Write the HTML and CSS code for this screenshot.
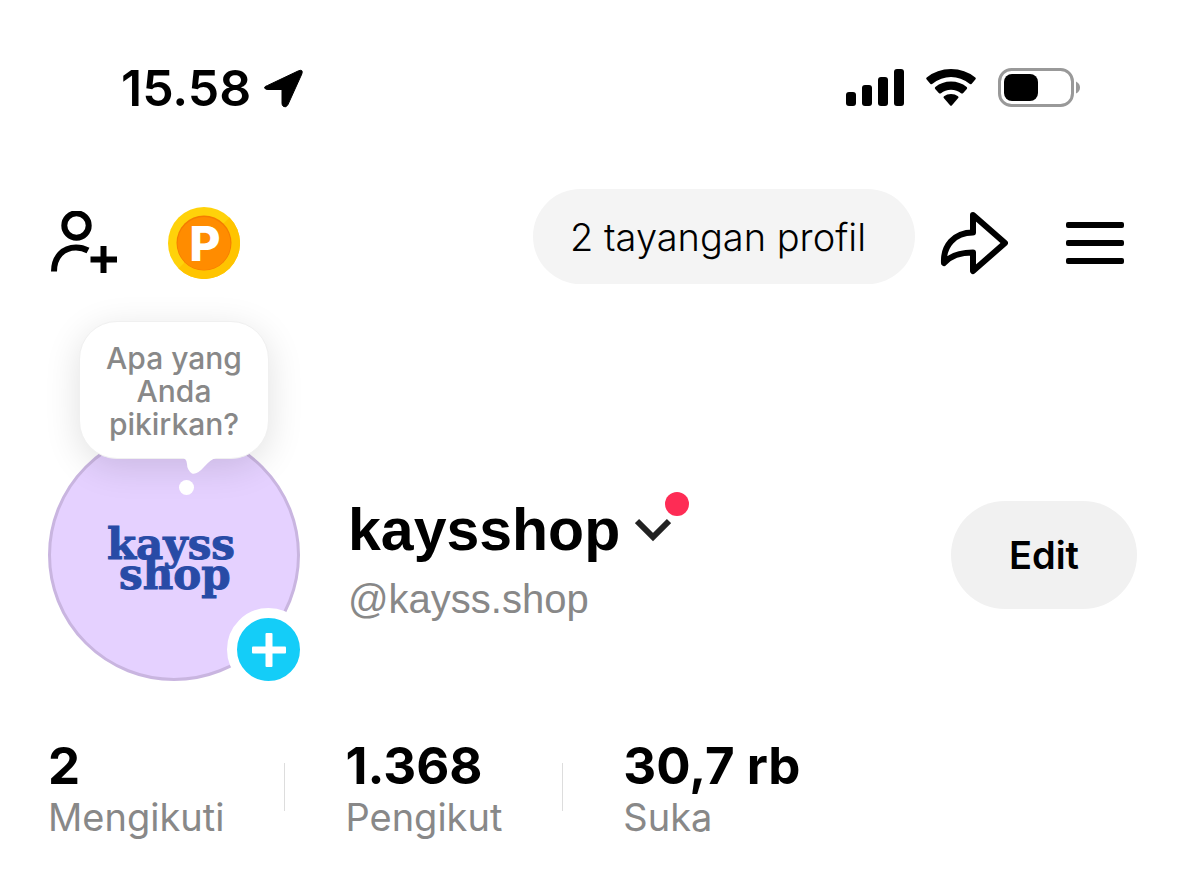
FILE: index.html
```
<!DOCTYPE html>
<html lang="id">
<head>
    <meta charset="UTF-8">
    <meta name="viewport" content="width=device-width, initial-scale=1.0">
    <title>kaysshop</title>
    <link rel="stylesheet" href="styles.css">
</head>
<body>
    <div class="status-bar">
        <div class="status-left">
            <span class="time">15.58</span>
            <svg width="40" height="40" viewBox="0 0 40 40" stroke="#000" stroke-linejoin="round"><path d="M3.500 17.500 34.500 2.800Q39.500 1 37.800 6L24 36.500Q22.300 40 19.500 38.500 18 37.500 18 35.500V21.500H4Q.800 21.500.500 19.500.500 18.500 3.500 17.500Z"/></svg>
        </div>
        <div class="status-right">
            <svg width="58" height="38" viewBox="0 0 58 38">
                <rect x="0" y="23" width="10" height="14" rx="3"/>
                <rect x="16" y="16" width="10" height="21" rx="3"/>
                <rect x="32" y="8" width="10" height="29" rx="3"/>
                <rect x="48" y="0" width="10" height="37" rx="3"/>
            </svg>
            <svg width="50" height="38" viewBox="0 0 50 38">
                <path d="M.700 10.500Q-.300 9.500.700 8.500 11 0 25 0T49.300 8.500Q50.300 9.500 49.300 10.500L45.500 14.900Q44.500 15.700 43.500 14.800 35 8 25 8T6.500 14.800Q5.500 15.700 4.500 14.900Z"/>
                <path d="M9.200 20Q8.300 19 9.300 18 16 12.500 25 12.500T40.700 18Q41.700 19 40.800 20L37 24.200Q36 25 35 24.200 31 20.700 25 20.700T15 24.200Q14 25 13 24.200Z"/>
                <path d="M17.800 29.100Q17 28 18 27.200 21 25 25 25T32 27.200Q33 28 32.200 29.100L26 36.300Q25 37.300 24 36.300Z"/>
            </svg>
            <svg width="84" height="40" viewBox="0 0 84 40">
                <rect x="1.500" y="1.500" width="73" height="36" rx="12" fill="none" stroke="#999" stroke-width="3"/>
                <rect x="6" y="6" width="34" height="27" rx="8"/>
                <path d="M78 13.500q4 2 4 6t-4 6z" fill="#999"/>
            </svg>
        </div>
    </div>

    <nav class="top-nav">
        <button class="icon-btn" type="button" aria-label="Tambah teman">
            <svg width="68" height="64" viewBox="0 0 68 64" fill="none" stroke="#000" stroke-width="6" stroke-linejoin="round">
                <circle cx="26.500" cy="14.500" r="12.200"/>
                <path d="M4 60.500C4 46 13 36.500 26 36.500q6.500 0 12 3"/>
                <path d="M53.500 35v27M40.500 48.500H67"/>
            </svg>
        </button>
        <button class="icon-btn coin" type="button">
            <svg width="72" height="72" viewBox="0 0 72 72">
                <circle cx="36" cy="36" r="36" fill="#ffd20a"/>
                <path d="M10.500 61.500A36 36 0 0 0 61.500 10.500z" fill="#ffc400"/>
                <circle cx="36" cy="36" r="27.500" fill="#f57c00"/>
                <circle cx="36" cy="36.500" r="26.500" fill="#ff8c00"/>
                <text class="coin-letter" x="37" y="54" text-anchor="middle">P</text>
            </svg>
        </button>
        <button class="views" type="button">2 tayangan profil</button>
        <button class="icon-btn share" type="button" aria-label="Bagikan">
            <svg width="68" height="64" viewBox="0 0 68 64" fill="none" stroke="#000" stroke-width="6" stroke-linejoin="round">
                <path d="M33 4 65 32 33 60V41.500C22 41.500 11 44 4 52 3 35 14 21.500 33 21.500Z"/>
            </svg>
        </button>
        <button class="icon-btn menu" type="button" aria-label="Menu">
            <svg width="58" height="44" viewBox="0 0 58 44">
                <rect y="1" width="58" height="6" rx="2"/>
                <rect y="19" width="58" height="6" rx="2"/>
                <rect y="37" width="58" height="6" rx="2"/>
            </svg>
        </button>
    </nav>

    <main>
        <section class="profile">
            <div class="avatar">
                <svg class="logo" width="140" height="90" viewBox="0 0 140 90">
                    <text x="3" y="49">kayss</text>
                    <text x="15" y="79">shop</text>
                </svg>
                <button class="bubble" type="button">
                    Apa yang Anda pikirkan?
                    <svg class="bubble-tail" width="44" height="40" viewBox="0 0 44 40" fill="#fff">
                        <path d="M2 0Q9 1 9 7T14 16.500Q19 18 26 10 33 2 38 1V0Z"/>
                        <circle cx="8.500" cy="30.500" r="7.500"/>
                    </svg>
                </button>
                <button class="add-story" type="button" aria-label="Tambah cerita">
                    <svg width="34" height="34" viewBox="0 0 34 34" fill="#fff">
                        <rect x="13.500" y="0" width="7" height="34" rx="1"/>
                        <rect x="0" y="13.500" width="34" height="7" rx="1"/>
                    </svg>
                </button>
            </div>
            <div class="who">
                <h1>
                    kaysshop
                    <button class="switch" type="button" aria-label="Ganti akun">
                        <svg width="36" height="24" viewBox="0 0 36 24" fill="none" stroke="#222" stroke-width="6"><path d="M2 3 18 19 34 3"/></svg>
                        <span class="dot"></span>
                    </button>
                </h1>
                <p>@kayss.shop</p>
            </div>
            <button class="edit" type="button">Edit</button>
        </section>

        <section class="stats">
            <a href="#"><strong>2</strong><span>Mengikuti</span></a>
            <i class="divider"></i>
            <a href="#"><strong>1.368</strong><span>Pengikut</span></a>
            <i class="divider"></i>
            <a href="#"><strong>30,7 rb</strong><span>Suka</span></a>
        </section>
    </main>
</body>
</html>
```
FILE: styles.css
```
* {
    box-sizing: border-box;
}
body {
    margin: 0;
    background-color: #fff;
    color: #000;
    font-family: Inter, "Liberation Sans", sans-serif;
}
button {
    padding: 0;
    border: none;
    background: none;
    color: inherit;
    font-family: inherit;
    cursor: pointer;
}
svg {
    display: block;
}
.status-bar {
    display: flex;
    justify-content: space-between;
    align-items: center;
    padding: 58px 96px 0 121px;
}
.status-left {
    display: flex;
    align-items: center;
    gap: 13px;
}
.time {
    font-size: 50px;
    font-weight: 600;
    line-height: 60px;
}
.status-right {
    display: flex;
    align-items: center;
    gap: 22px;
}
.top-nav {
    display: flex;
    align-items: center;
    padding: 71px 54px 0 50px;
}
.coin {
    margin-left: 50px;
}
.coin-letter {
    fill: #fff;
    font-size: 48px;
    font-weight: 800;
}
.views {
    height: 95px;
    margin: 0 25px 12px auto;
    padding: 0 49px 0 37px;
    border-radius: 48px;
    background-color: #f4f4f4;
    font-size: 38px;
    font-weight: 300;
}
.menu {
    margin-left: 58px;
}
.profile {
    display: flex;
    align-items: center;
    padding: 133px 41px 0 48px;
}
.avatar {
    position: relative;
    display: flex;
    align-items: center;
    justify-content: center;
    width: 252px;
    height: 252px;
    border: 3px solid #c9b5e0;
    border-radius: 50%;
    background-color: #e5d1ff;
}
.logo {
    fill: #284ba6;
    stroke: #284ba6;
    font-family: "DejaVu Serif", serif;
    font-size: 42px;
    font-weight: 700;
}
.bubble {
    position: absolute;
    top: -111px;
    left: 28px;
    width: 190px;
    height: 138px;
    padding: 2px 20px 0;
    border: 1px solid #f0f0f0;
    border-radius: 38px;
    background-color: #fff;
    box-shadow: 0 8px 36px rgba(0, 0, 0, 0.12);
    color: #888;
    font-size: 30px;
    font-weight: 500;
    line-height: 33px;
}
.bubble-tail {
    position: absolute;
    top: 135px;
    left: 98px;
}
.add-story {
    position: absolute;
    right: -13px;
    bottom: -13px;
    display: flex;
    align-items: center;
    justify-content: center;
    width: 83px;
    height: 83px;
    border: 10px solid #fff;
    border-radius: 50%;
    background-color: #14cdf8;
}
.who {
    margin-left: 48px;
    padding-top: 7px;
}
h1 {
    display: flex;
    align-items: center;
    gap: 15px;
    margin: 0;
    font-family: "Liberation Sans", sans-serif;
    font-size: 59px;
    line-height: 68px;
}
.switch {
    position: relative;
}
.dot {
    position: absolute;
    top: -26px;
    right: -18px;
    width: 24px;
    height: 24px;
    border-radius: 50%;
    background-color: #fe2c55;
}
.who p {
    margin: 12px 0 0;
    color: #888;
    font-family: "Liberation Sans", sans-serif;
    font-size: 40px;
    line-height: 46px;
}
.edit {
    width: 186px;
    height: 108px;
    margin-left: auto;
    border-radius: 54px;
    background-color: #f1f1f1;
    font-size: 38px;
    font-weight: 600;
}
.stats {
    display: flex;
    align-items: center;
    gap: 60px;
    padding: 55px 48px 32px;
}
.stats a {
    color: inherit;
    text-decoration: none;
}
.stats strong,
.stats span {
    display: block;
}
.stats strong {
    font-size: 51px;
    font-weight: 700;
    line-height: 60px;
}
.stats span {
    color: #888;
    font-size: 38px;
    line-height: 42px;
}
.divider {
    width: 1px;
    height: 48px;
    background-color: #ddd;
}
```
